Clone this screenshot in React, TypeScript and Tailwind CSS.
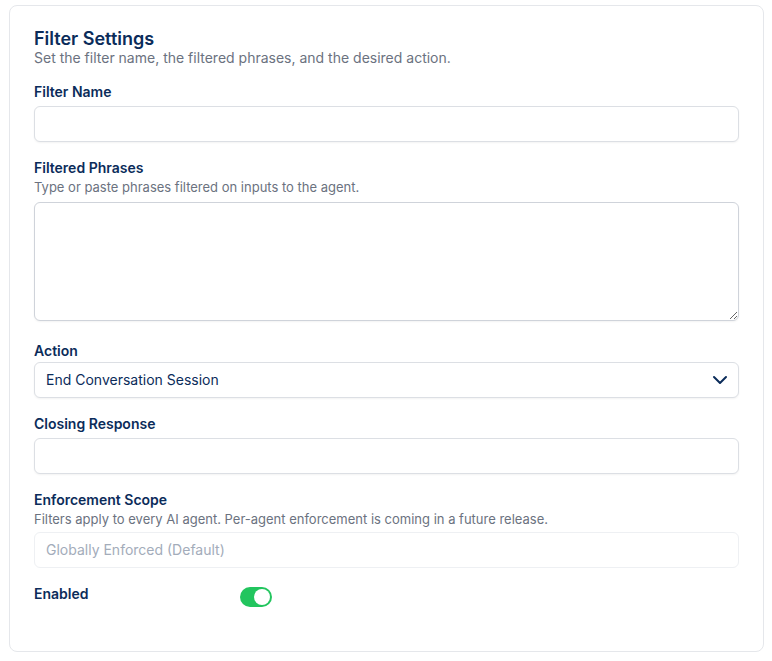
import { ChevronDown } from "lucide-react";

const font = { fontFamily: "Inter, 'Noto Sans', sans-serif" };

function Label({ children }: { children: React.ReactNode }) {
  return <label className="block text-sm font-semibold leading-5 text-[#0b2c5a]">{children}</label>;
}

function Hint({ children }: { children: React.ReactNode }) {
  return <p className="text-[13px] leading-[18px] text-[#6b7280]">{children}</p>;
}

const inputCls =
  "block w-full h-9 rounded-md border border-[#dcdfe4] bg-white px-3 text-sm text-[#0b2c5a] shadow-[0_1px_2px_rgba(0,0,0,0.05)] outline-none";

export default function App() {
  return (
    <div className="min-h-screen bg-white pt-[5px] pl-[9px] pr-[8px]" style={font}>
      <div className="rounded-lg border border-[#e5e7eb] bg-white px-6 pt-[22px] pb-11">
        <h2 className="text-lg font-semibold leading-[22px] text-[#0b2c5a]">Filter Settings</h2>
        <p className="-mt-[2px] text-sm leading-5 text-[#6b7280]">
          Set the filter name, the filtered phrases, and the desired action.
        </p>

        <div className="mt-[14px] flex flex-col gap-4">
          <div>
            <Label>Filter Name</Label>
            <input className={`${inputCls} mt-1`} />
          </div>

          <div>
            <Label>Filtered Phrases</Label>
            <Hint>Type or paste phrases filtered on inputs to the agent.</Hint>
            <textarea className="mt-[6px] block h-[119px] w-full rounded-md border border-[#cfd3da] bg-white px-3 py-2 text-sm shadow-[0_1px_2px_rgba(0,0,0,0.05)] outline-none" />
          </div>

          <div className="pt-1">
            <Label>Action</Label>
            <div className={`${inputCls} mt-[1px] flex items-center justify-between !pl-[11px] !pr-[6px]`}>
              <span>End Conversation Session</span>
              <ChevronDown className="h-6 w-6 text-[#0b2c5a]" strokeWidth={2} />
            </div>
          </div>

          <div>
            <Label>Closing Response</Label>
            <input className={`${inputCls} mt-1`} />
          </div>

          <div>
            <Label>Enforcement Scope</Label>
            <Hint>Filters apply to every AI agent. Per-agent enforcement is coming in a future release.</Hint>
            <div className="mt-1 flex h-9 w-full items-center rounded-md border border-[#eef0f3] bg-white pl-[11px] text-sm text-[#a3acba]">
              Globally Enforced (Default)
            </div>
          </div>

          <div className="flex items-start">
            <span className="w-[206px] text-sm font-semibold leading-5 text-[#0b2c5a]">Enabled</span>
            <button className="mt-[3px] flex h-5 w-8 items-center justify-end rounded-full bg-[#22c55e] px-[2px]">
              <span className="h-4 w-4 rounded-full bg-white" />
            </button>
          </div>
        </div>
      </div>
    </div>
  );
}
